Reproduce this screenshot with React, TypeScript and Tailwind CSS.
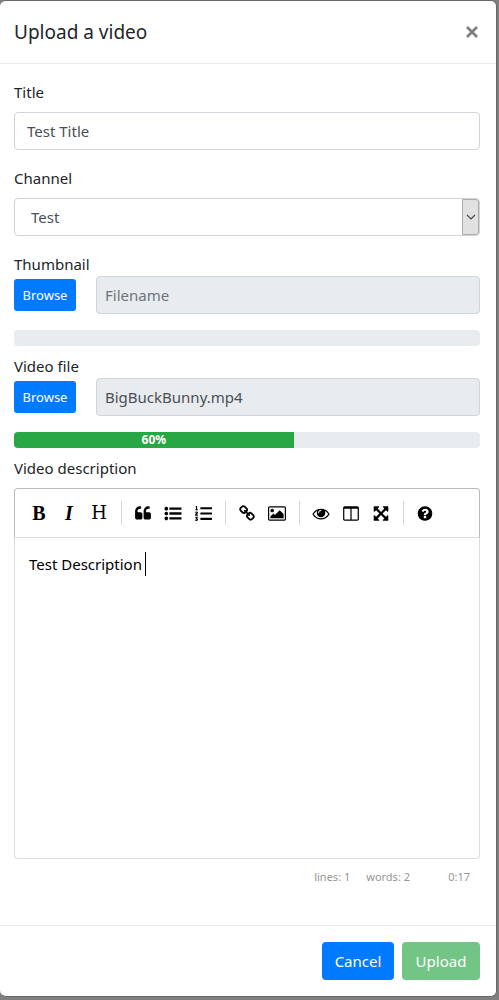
import type { ReactNode } from "react";
import { FaListOl } from "react-icons/fa";

const paths = {
  quote:
    "M832 960v384q0 80-56 136t-136 56h-384q-80 0-136-56t-56-136v-704q0-104 40.500-198.500t109.500-163.500 163.500-109.500 198.500-40.500h64q26 0 45 19t19 45v128q0 26-19 45t-45 19h-64q-106 0-181 75t-75 181v32q0 40 28 68t68 28h224q80 0 136 56t56 136zm896 0v384q0 80-56 136t-136 56h-384q-80 0-136-56t-56-136v-704q0-104 40.500-198.500t109.500-163.500 163.500-109.500 198.500-40.500h64q26 0 45 19t19 45v128q0 26-19 45t-45 19h-64q-106 0-181 75t-75 181v32q0 40 28 68t68 28h224q80 0 136 56t56 136z",
  list:
    "M384 1408q0 80-56 136t-136 56-136-56-56-136 56-136 136-56 136 56 56 136zm0-512q0 80-56 136t-136 56-136-56-56-136 56-136 136-56 136 56 56 136zm1408 416v192q0 13-9.500 22.500t-22.500 9.500h-1216q-13 0-22.500-9.500t-9.500-22.500v-192q0-13 9.500-22.500t22.500-9.500h1216q13 0 22.500 9.500t9.500 22.500zm-1408-928q0 80-56 136t-136 56-136-56-56-136 56-136 136-56 136 56 56 136zm1408 416v192q0 13-9.500 22.500t-22.500 9.500h-1216q-13 0-22.500-9.500t-9.500-22.500v-192q0-13 9.500-22.500t22.500-9.500h1216q13 0 22.500 9.500t9.500 22.500zm0-512v192q0 13-9.500 22.500t-22.500 9.500h-1216q-13 0-22.500-9.500t-9.500-22.500v-192q0-13 9.500-22.500t22.500-9.500h1216q13 0 22.500 9.500t9.500 22.500z",
  link:
    "M1520 1216q0-40-28-68l-208-208q-28-28-68-28-42 0-72 32 3 3 19 18.500t21.500 21.500 15 19 13 25.500 3.500 27.500q0 40-28 68t-68 28q-15 0-27.500-3.500t-25.500-13-19-15-21.500-21.500-18.500-19q-33 31-33 73 0 40 28 68l206 207q27 27 68 27 40 0 68-26l147-146q28-28 28-67zm-703-705q0-40-28-68l-206-207q-28-28-68-28-39 0-68 27l-147 146q-28 28-28 67 0 40 28 68l208 208q27 27 68 27 42 0 72-31-3-3-19-18.500t-21.500-21.500-15-19-13-25.500-3.500-27.500q0-40 28-68t68-28q15 0 27.500 3.500t25.500 13 19 15 21.500 21.500 18.500 19q33-31 33-73zm895 705q0 120-85 203l-147 146q-83 83-203 83-121 0-204-85l-206-207q-83-83-83-203 0-123 88-209l-88-88q-86 88-208 88-120 0-204-84l-208-208q-84-84-84-204t85-203l147-146q83-83 203-83 121 0 204 85l206 207q83 83 83 203 0 123-88 209l88 88q86-88 208-88 120 0 204 84l208 208q84 84 84 204z",
  image:
    "M640 576q0 80-56 136t-136 56-136-56-56-136 56-136 136-56 136 56 56 136zm1024 384v448h-1408v-192l320-320 160 160 512-512zm96-704h-1600q-13 0-22.500 9.500t-9.500 22.500v1216q0 13 9.500 22.500t22.500 9.500h1600q13 0 22.500-9.500t9.500-22.500v-1216q0-13-9.500-22.500t-22.500-9.500zm160 32v1216q0 66-47 113t-113 47h-1600q-66 0-113-47t-47-113v-1216q0-66 47-113t113-47h1600q66 0 113 47t47 113z",
  eye:
    "M1664 960q-152-236-381-353 61 104 61 225 0 185-131.500 316.500t-316.500 131.500-316.500-131.500-131.500-316.500q0-121 61-225-229 117-381 353 133 205 333.500 326.500t434.500 121.500 434.500-121.500 333.500-326.500zm-720-384q0-20-14-34t-34-14q-125 0-214.500 89.500t-89.500 214.500q0 20 14 34t34 14 34-14 14-34q0-86 61-147t147-61q20 0 34-14t14-34zm848 384q0 34-20 69-140 230-376.500 368.500t-499.500 138.500-499.500-139-376.500-368q-20-35-20-69t20-69q140-229 376.500-368t499.500-139 499.500 139 376.500 368q20 35 20 69z",
  columns:
    "M160 1536h608v-1152h-640v1120q0 13 9.500 22.500t22.500 9.500zm1376-32v-1120h-640v1152h608q13 0 22.500-9.500t9.500-22.500zm128-1216v1216q0 66-47 113t-113 47h-1344q-66 0-113-47t-47-113v-1216q0-66 47-113t113-47h1344q66 0 113 47t47 113z",
  expand:
    "M1411 541l-355 355 355 355 144-144q29-31 70-14 39 17 39 59v448q0 26-19 45t-45 19h-448q-42 0-59-40-17-39 14-69l144-144-355-355-355 355 144 144q31 30 14 69-17 40-59 40h-448q-26 0-45-19t-19-45v-448q0-42 40-59 39-17 69 14l144 144 355-355-355-355-144 144q-19 19-45 19-12 0-24-5-40-17-40-59v-448q0-26 19-45t45-19h448q42 0 59 40 17 39-14 69l-144 144 355 355 355-355-144-144q-31-30-14-69 17-40 59-40h448q26 0 45 19t19 45v448q0 42-39 59-13 5-25 5-26 0-45-19z",
  help:
    "M1024 1376v-192q0-14-9-23t-23-9h-192q-14 0-23 9t-9 23v192q0 14 9 23t23 9h192q14 0 23-9t9-23zm256-672q0-88-55.500-163t-138.500-116-170-41q-243 0-371 213-15 24 8 42l132 100q7 6 19 6 16 0 25-12 53-68 86-92 34-24 86-24 48 0 85.500 26t37.500 59q0 38-20 61t-68 45q-63 28-115.500 86.500t-52.500 125.500v36q0 14 9 23t23 9h192q14 0 23-9t9-23q0-19 21.500-49.500t54.500-49.500q32-18 49-28.500t46-35 44.500-48 28-60.500 12.500-81zm384 192q0 209-103 385.500t-279.500 279.500-385.500 103-385.500-103-279.500-279.500-103-385.500 103-385.500 279.500-279.500 385.500-103 385.500 103 279.500 279.500 103 385.500z",
};

function Glyph({ name, box = "0 0 1792 1792" }: { name: keyof typeof paths; box?: string }) {
  return (
    <svg viewBox={box} className="h-[17px] w-[18px] fill-current" aria-hidden="true">
      <path d={paths[name]} />
    </svg>
  );
}

function Tool({ label, children }: { label: string; children: ReactNode }) {
  return (
    <button
      type="button"
      aria-label={label}
      className="flex h-[30px] w-[30px] items-center justify-center font-['Liberation_Serif',serif] text-xl leading-none"
    >
      {children}
    </button>
  );
}

function Separator() {
  return <span className="mr-[6px] ml-[7px] h-6 w-px shrink-0 bg-[#d9d9d9]" />;
}

function FileField({
  id,
  label,
  value,
  progress,
}: {
  id: string;
  label: string;
  value?: string;
  progress: number;
}) {
  return (
    <div className="mb-2">
      <label htmlFor={id} className="block">
        {label}
      </label>
      <div className="flex items-center gap-5">
        <button type="button" className="h-8 w-[62px] rounded-[3px] bg-[#007bff] text-[13px] text-white">
          Browse
        </button>
        <input
          id={id}
          type="text"
          readOnly
          placeholder="Filename"
          defaultValue={value}
          className="h-[38px] min-w-0 flex-1 rounded border border-[#ced4da] bg-[#e9ecef] px-2 text-[#495057] placeholder:text-[#6c757d]"
        />
      </div>
      <div
        role="progressbar"
        aria-label={label}
        aria-valuenow={progress}
        className="mt-4 flex h-4 overflow-hidden rounded bg-[#e9ecef]"
      >
        {progress > 0 && (
          <div
            className="bg-[#28a745] text-center text-xs leading-4 font-bold text-white"
            style={{ width: `${progress}%` }}
          >
            {progress}%
          </div>
        )}
      </div>
    </div>
  );
}

export default function App() {
  return (
    <div className="min-h-screen bg-[#7f7f7f] pr-[2px] pb-[3px] font-['Noto_Sans','Open_Sans',sans-serif] text-[15px] leading-6 text-[#212529]">
      <form
        role="dialog"
        aria-labelledby="dialog-title"
        className="rounded-md border border-l-0 border-[#666] bg-white"
      >
        <header className="flex h-[63px] items-center justify-between border-b border-[#e9ecef] pr-[17px] pl-[14px]">
          <h5 id="dialog-title" className="text-[19px]">
            Upload a video
          </h5>
          <button type="button" aria-label="Close" className="text-[#7f7f7f]">
            <svg viewBox="0 0 14 14" className="h-[14px] w-[14px]" aria-hidden="true">
              <path d="M2 2l10 10M12 2L2 12" fill="none" stroke="currentColor" strokeWidth="2.8" />
            </svg>
          </button>
        </header>

        <div className="pt-4 pr-4 pl-[14px]">
          <div className="mb-4">
            <label htmlFor="title" className="mb-2 block">
              Title
            </label>
            <input
              id="title"
              type="text"
              defaultValue="Test Title"
              className="h-[38px] w-full rounded border border-[#ced4da] bg-white px-3 text-[#495057]"
            />
          </div>

          <div className="mb-4">
            <label htmlFor="channel" className="mb-2 block">
              Channel
            </label>
            <div className="relative">
              <select
                id="channel"
                className="block h-[38px] w-full appearance-none rounded border border-[#ced4da] bg-white px-4 text-[#495057]"
              >
                <option>Test</option>
              </select>
              <span className="pointer-events-none absolute inset-y-px right-px flex w-[17px] items-center justify-center rounded-r-[3px] border border-[#adadad] bg-[#e1e1e1]">
                <svg viewBox="0 0 10 6" className="h-[6px] w-[10px]" aria-hidden="true">
                  <path d="M1 1l4 4 4-4" fill="none" stroke="#444" strokeWidth="1.1" />
                </svg>
              </span>
            </div>
          </div>

          <FileField id="thumbnail" label="Thumbnail" progress={0} />
          <FileField id="video" label="Video file" value="BigBuckBunny.mp4" progress={60} />

          <label htmlFor="description" className="mb-2 block">
            Video description
          </label>
          <div className="flex h-[50px] items-center rounded-t border border-b-[#ddd] border-[#bbb] pl-[9px] text-black">
            <Tool label="Bold">
              <b>B</b>
            </Tool>
            <Tool label="Italic">
              <b className="italic">I</b>
            </Tool>
            <Tool label="Heading">
              <span className="font-['DejaVu_Serif',serif] text-lg leading-none">H</span>
            </Tool>
            <Separator />
            <Tool label="Quote">
              <Glyph name="quote" />
            </Tool>
            <Tool label="Generic list">
              <Glyph name="list" />
            </Tool>
            <Tool label="Numbered list">
              <FaListOl className="h-[17px] w-[17px]" />
            </Tool>
            <Separator />
            <Tool label="Create link">
              <Glyph name="link" />
            </Tool>
            <Tool label="Insert image">
              <Glyph name="image" box="0 0 1920 1792" />
            </Tool>
            <Separator />
            <Tool label="Toggle preview">
              <Glyph name="eye" />
            </Tool>
            <Tool label="Toggle side by side">
              <Glyph name="columns" box="0 0 1664 1792" />
            </Tool>
            <Tool label="Toggle fullscreen">
              <Glyph name="expand" />
            </Tool>
            <Separator />
            <Tool label="Markdown guide">
              <Glyph name="help" />
            </Tool>
          </div>
          <div className="relative">
            <textarea
              id="description"
              defaultValue="Test Description "
              className="block h-[321px] w-full resize-none rounded-b border border-t-0 border-[#ddd] px-[14px] py-[14px] text-black"
            />
            <span className="absolute top-[14px] left-[131px] h-6 w-px bg-black" />
          </div>
          <div className="flex justify-end gap-4 px-[10px] pt-2 pb-[38px] text-[11px] leading-5 text-[#959694]">
            <span>lines: 1</span>
            <span>words: 2</span>
            <span className="w-11 text-right">0:17</span>
          </div>
        </div>

        <footer className="flex justify-end gap-2 border-t border-[#e9ecef] py-4 pr-4">
          <button type="button" className="h-[38px] w-[72px] rounded bg-[#007bff] text-white">
            Cancel
          </button>
          <button
            type="submit"
            disabled
            className="h-[38px] w-[78px] rounded bg-[#28a745] text-white opacity-65"
          >
            Upload
          </button>
        </footer>
      </form>
    </div>
  );
}
